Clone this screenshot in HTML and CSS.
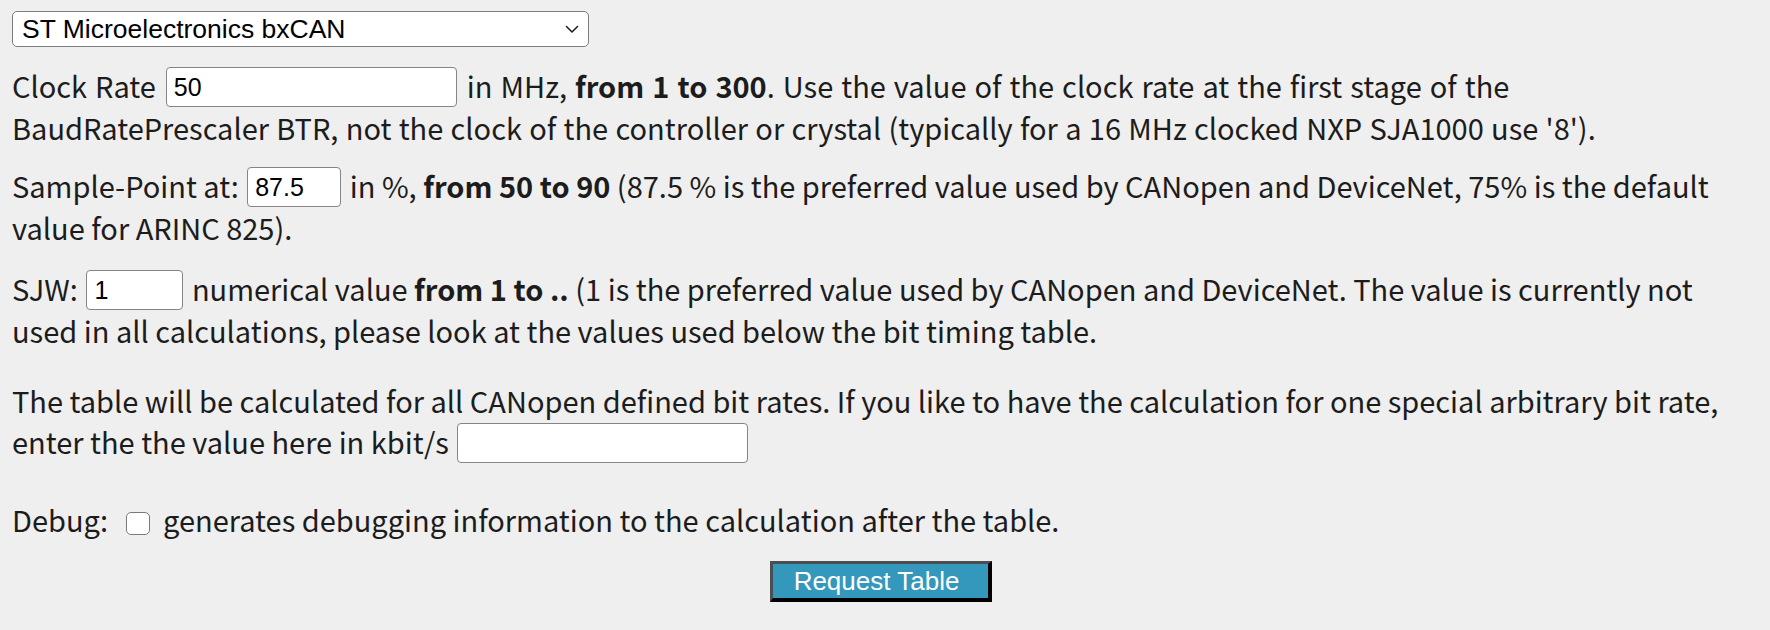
FILE: index.html
```html
<!DOCTYPE html>
<html>
<head>
<meta charset="utf-8">
<link rel="stylesheet" href="styles.css">
</head>
<body>
<form class="form">
  <div class="select-wrap">
    <select class="ctrl-select">
      <option>ST Microelectronics bxCAN</option>
    </select>
    <svg class="chevron" width="14" height="9" viewBox="0 0 14 9"><path d="M1.5 1.5 L7 7 L12.5 1.5" fill="none" stroke="#222" stroke-width="1.6" stroke-linecap="round" stroke-linejoin="round"/></svg>
  </div>
  <p class="para p-clock"><span class="wide">Clock Rate <input class="field f-clock" type="text" value="50"> in MHz, <b>from 1 to 300</b>. Use the value of the clock rate at the first stage of the</span><br>BaudRatePrescaler BTR, not the clock of the controller or crystal (typically for a 16 MHz clocked NXP SJA1000 use '8').</p>
  <p class="para p-sample">Sample-Point at: <input class="field f-sample" type="text" value="87.5"> in %, <b>from 50 to 90</b> (87.5 % is the preferred value used by CANopen and DeviceNet, 75% is the default<br>value for ARINC 825).</p>
  <p class="para p-sjw">SJW: <input class="field f-sjw" type="text" value="1"> numerical value <b>from 1 to ..</b> (1 is the preferred value used by CANopen and DeviceNet. The value is currently not<br>used in all calculations, please look at the values used below the bit timing table.</p>
  <p class="para p-rate">The table will be calculated for all CANopen defined bit rates. If you like to have the calculation for one special arbitrary bit rate,<br>enter the the value here in kbit/s <input class="field f-rate" type="text" value=""></p>
  <p class="para p-debug">Debug: <input class="check" type="checkbox"> generates debugging information to the calculation after the table.</p>
  <div class="actions">
    <button class="btn" type="button">Request Table</button>
  </div>
</form>
</body>
</html>
```
FILE: styles.css
```css
html, body {
  margin: 0;
  padding: 0;
  background: #efefef;
}
body {
  padding: 11px 12px 0 12px;
  font-family: "Noto Sans CJK KR", "Noto Sans", sans-serif;
  font-size: 29px;
  line-height: 41px;
  color: #1c1c1c;
  white-space: nowrap;
}
.select-wrap {
  position: relative;
  width: 577px;
  height: 36px;
}
.ctrl-select {
  display: block;
  -webkit-appearance: none;
  appearance: none;
  width: 577px;
  height: 36px;
  margin: 0;
  padding: 0 0 0 9px;
  box-sizing: border-box;
  border: 1px solid #7d7d7d;
  border-radius: 5px;
  background: #fff;
  font-family: "Liberation Sans", Arial, sans-serif;
  font-size: 26.5px;
  color: #000;
}
.chevron {
  position: absolute;
  right: 10px;
  top: 14px;
  pointer-events: none;
}
.para {
  margin: 0;
}
.p-clock { margin-top: 18px; word-spacing: 0.8px; }
.p-clock .wide { word-spacing: 1.5px; }
.p-sample { margin-top: 17px; }
.p-sjw { margin-top: 20px; }
.p-rate { margin-top: 29px; }
.p-debug { margin-top: 36px; }
.field {
  box-sizing: border-box;
  height: 40px;
  margin: 0 2px;
  padding: 1px 7px 0 7px;
  border: 1px solid #858585;
  border-radius: 4px;
  background: #fff;
  font-family: "Liberation Sans", Arial, sans-serif;
  font-size: 25px;
  color: #000;
  vertical-align: 2px;
  outline: none;
  word-spacing: 0;
}
.f-clock { width: 291px; }
.f-sample { width: 94px; }
.f-sjw { width: 97px; }
.f-rate { width: 291px; }
.check {
  -webkit-appearance: none;
  appearance: none;
  box-sizing: border-box;
  width: 24px;
  height: 23px;
  margin: 0 6px 0 12px;
  border: 1.5px solid #7a7a7a;
  border-radius: 5px;
  background: #fff;
  vertical-align: -3px;
}
.actions {
  margin-top: 17px;
  text-align: center;
}
.btn {
  box-sizing: border-box;
  height: 41px;
  margin: 0 8px 0 0;
  padding: 0 29px 0 21px;
  border-style: solid;
  border-width: 3px 4px 4px 3px;
  border-color: #4b4f52 #000 #000 #4b4f52;
  background: #3398bc;
  color: #fff;
  font-family: "Liberation Sans", Arial, sans-serif;
  font-size: 26px;
  line-height: 32px;
}
```
